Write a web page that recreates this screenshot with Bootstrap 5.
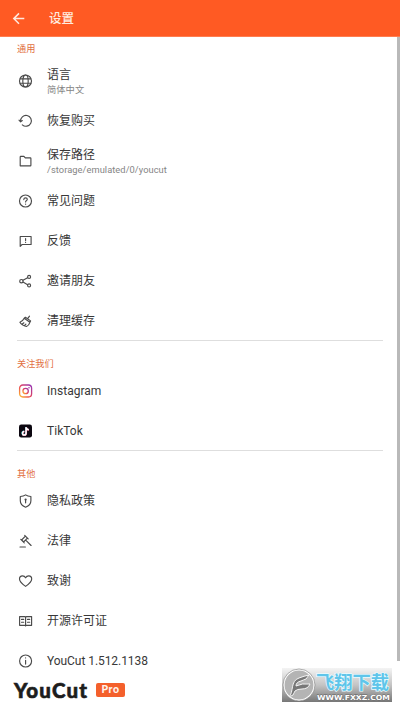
<!DOCTYPE html>
<html lang="zh-CN">
<head>
<meta charset="utf-8">
<meta name="viewport" content="width=device-width, initial-scale=1">
<title>设置</title>
<link href="https://cdn.jsdelivr.net/npm/bootstrap@5.3.0/dist/css/bootstrap.min.css" rel="stylesheet">
<style>
body{font-family:Roboto,"Noto Sans CJK SC",sans-serif;font-size:12px;line-height:16px;color:#383838;background:#fff;height:710px;overflow:hidden}
.topbar{height:37px;background:#ff5a23;color:#ffeadf;padding-left:11px;gap:22px;border-bottom:1px solid #ff7d50}
.topbar h1{font-size:12.5px;line-height:18px;font-weight:500;padding-top:1px}
.group-title{height:30px;padding:14px 0 0 17px;font-size:9.2px;line-height:17px;color:#e2703f;font-weight:400}
.group-title.first{height:24px;padding-top:3px}
.group-rows{margin:0 17px}
.group-rows.ruled{border-bottom:1px solid #dedede}
.setting{height:40px;gap:13px;padding-left:1px}
.ruled .setting:last-child{height:39px;padding-top:1px}
.setting svg{width:16px;height:16px;flex:none;fill:none;stroke:#4a4a4a;stroke-width:1.15;stroke-linecap:round;stroke-linejoin:round}
.latin{letter-spacing:.03px}
.version{letter-spacing:-.06px}
.hint{font-size:9.3px;line-height:13px;color:#858585}
.path-label{padding-top:2px}
.hint.path{letter-spacing:.06px;line-height:14px}
.brand{height:29px;padding:0 0 0 14px;gap:6px}
.brand-name{width:76px;font:900 20.5px/19px Lato,sans-serif;color:#1d1d1d;letter-spacing:1.15px;-webkit-text-stroke:.6px #1d1d1d}
.pro{width:29px;height:14px;margin-top:2px;border-radius:2px;background:#f4602c;color:#fff3ec;font:900 10.5px/13px Lato,sans-serif;letter-spacing:.6px}
.scroll-thumb{right:0;top:37px;width:3px;height:624px;background:#b9b9b9}
.watermark{left:282px;top:668px;width:110px;height:34px}
</style>
<script src="https://cdn.jsdelivr.net/npm/bootstrap@5.3.0/dist/js/bootstrap.bundle.min.js"></script>
</head>
<body class="position-relative">
<header class="topbar d-flex align-items-center">
<svg width="16" height="16" viewBox="0 0 16 16" fill="none" stroke="#ffe9de" stroke-width="1.5"><path d="M13.3 8.6H3M8 3.4 2.8 8.6 8 13.8"/></svg>
<h1 class="m-0">设置</h1>
</header>
<main>
<section>
<h2 class="group-title first m-0">通用</h2>
<div class="group-rows ruled">
<div class="setting d-flex align-items-center"><svg viewBox="0 0 16 16"><circle cx="7.5" cy="8" r="6"/><ellipse cx="7.5" cy="8" rx="2.7" ry="6"/><path d="M2.3 5.8h10.4M2.3 10.2h10.4"/></svg><div>语言<div class="hint">简体中文</div></div></div>
<div class="setting d-flex align-items-center"><svg viewBox="0 0 16 16"><path d="M2.6 8.3A5.4 5.4 0 1 1 4.3 11.8M1 7.2l1.6 1.7L4.3 7.5"/></svg><div>恢复购买</div></div>
<div class="setting d-flex align-items-center"><svg viewBox="0 0 16 16"><path d="M2.2 12.8V3.9q0-.6.6-.6h3.1l1.4 1.6h5q.6 0 .6.6v6.8q0 .6-.6.6H2.8q-.6 0-.6-.5Z"/></svg><div class="path-label">保存路径<div class="hint path">/storage/emulated/0/youcut</div></div></div>
<div class="setting d-flex align-items-center"><svg viewBox="0 0 16 16"><circle cx="7.5" cy="8" r="6"/><path d="M5.8 6.6q0-1.8 1.8-1.8 1.7 0 1.7 1.5 0 .9-1 1.5-.7.4-.7 1.2M7.6 11v.2"/></svg><div>常见问题</div></div>
<div class="setting d-flex align-items-center"><svg viewBox="0 0 16 16"><path d="M2.2 13.3V3.5h10.9v8H4.1l-1.9 1.8ZM7.6 5.6v2M7.6 9.3v.1"/></svg><div>反馈</div></div>
<div class="setting d-flex align-items-center"><svg viewBox="0 0 16 16"><circle cx="3.4" cy="8.2" r="1.7"/><circle cx="11.1" cy="3.9" r="1.5"/><circle cx="11.1" cy="12.4" r="1.5"/><path d="m5 7.3 4.6-2.6M5 9.1l4.6 2.6"/></svg><div>邀请朋友</div></div>
<div class="setting d-flex align-items-center"><svg viewBox="0 0 16 16"><path d="M6.2 5.3Q4.7 8.4 1.9 9.2q1.8 3.1 6.6 4.3 2.4-1 3.4-4.2ZM6.2 5.3l1.2-1 5.2 3.6-.7 1.4M9.6 5.7l1.9-2.6M4 11.3l1.9-1.5M6.4 12.7l1.5-1.6"/></svg><div>清理缓存</div></div>
</div>
</section>
<section>
<h2 class="group-title m-0">关注我们</h2>
<div class="group-rows ruled">
<div class="setting d-flex align-items-center"><svg viewBox="0 0 16 16"><defs><linearGradient id="insta" x1="0" y1="1" x2="1" y2="0"><stop stop-color="#ffc02e"/><stop offset=".45" stop-color="#e94457"/><stop offset="1" stop-color="#9133b8"/></linearGradient></defs><g stroke="url(#insta)" stroke-width="1.3"><rect x="1.6" y="2" width="12" height="12" rx="3.2"/><circle cx="7.6" cy="8" r="2.7"/></g><circle cx="11" cy="4.7" r=".8" fill="#b33ba0" stroke="none"/></svg><div class="latin">Instagram</div></div>
<div class="setting d-flex align-items-center"><svg viewBox="0 0 16 16"><rect x="1" y="1.5" width="13" height="13" rx="2.2" fill="#0c0710" stroke="none"/><g stroke-width="1.5" stroke-linecap="butt"><path d="M7.8 4v6a1.8 1.8 0 1 1-1.8-1.8M7.8 4q.2 2.3 2.7 2.6" stroke="#36dbe0"/><path d="M8.3 4.4v6a1.8 1.8 0 1 1-1.8-1.8M8.3 4.4q.2 2.3 2.7 2.6" stroke="#ed4270"/><path d="M8.1 4.2v6a1.8 1.8 0 1 1-1.8-1.8M8.1 4.2q.2 2.3 2.7 2.6" stroke="#fff"/></g></svg><div class="latin">TikTok</div></div>
</div>
</section>
<section>
<h2 class="group-title m-0">其他</h2>
<div class="group-rows">
<div class="setting d-flex align-items-center"><svg viewBox="0 0 16 16"><path d="M7.6 1.9q2.1 1.5 5.3 1.6v4.3q0 4.4-5.3 6.4-5.3-2-5.3-6.4V3.5q3.2-.1 5.3-1.6ZM7.6 7.2v2.6"/><circle cx="7.6" cy="6.5" r=".55"/></svg><div>隐私政策</div></div>
<div class="setting d-flex align-items-center"><svg viewBox="0 0 16 16"><path d="m3.6 7 3.8-3.8 2 2L5.6 9ZM6.7 2.4l3.5 3.5M2.8 6.3l3.5 3.5M7.7 7.2l5.4 5.3M2 14h5.4"/></svg><div>法律</div></div>
<div class="setting d-flex align-items-center"><svg viewBox="0 0 16 16"><path d="M7.6 13.4Q1.5 9.2 1.5 6.1q0-3.2 3-3.2 2.1 0 3.1 1.9 1-1.9 3.1-1.9 3 0 3 3.2 0 3.1-6.1 7.3Z"/></svg><div>致谢</div></div>
<div class="setting d-flex align-items-center"><svg viewBox="0 0 16 16"><path d="M1.6 3.6h4.9q1.1 0 1.1.8 0-.8 1.1-.8h4.9v8.7H8.7q-1.1 0-1.1.7 0-.7-1.1-.7H1.6ZM7.6 4.4V13M3.5 6.4h2.2M3.5 9.2h2.2M9.5 6.4h2.2M9.5 9.2h2.2"/></svg><div>开源许可证</div></div>
<div class="setting d-flex align-items-center"><svg viewBox="0 0 16 16"><circle cx="7.6" cy="8" r="6"/><path d="M7.6 7.3v3.8M7.6 4.9V5"/></svg><div class="version">YouCut 1.512.1138</div></div>
</div>
</section>
</main>
<footer class="brand d-flex align-items-start">
<span class="brand-name text-nowrap">YouCut</span><span class="pro text-center">Pro</span>
</footer>
<div class="scroll-thumb position-absolute"></div>
<svg class="watermark position-absolute" viewBox="0 0 110 34">
<defs><linearGradient id="band" x1="0" y1="0" x2="0" y2="1"><stop stop-color="#f4f4f4"/><stop offset=".5" stop-color="#c4c4c4"/><stop offset="1" stop-color="#777"/></linearGradient></defs>
<rect width="110" height="34" fill="url(#band)"/>
<circle cx="17" cy="17" r="15.2" fill="#b4b4b4" stroke="#fff" stroke-width="1.5"/><circle cx="17" cy="17" r="16" fill="none" stroke="#777" stroke-width=".6"/>
<path d="M7 29C12 24 8 13 17 10q5-2 10-3-2 5-8 6-5 1-5 5 6-3 14-2-2 5-8 5-5 0-7 2-1 5-6 6Z" fill="#777" stroke="#f5f5f5" stroke-width="1"/>
<text x="34" y="20.5" textLength="73" lengthAdjust="spacingAndGlyphs" font-family="Noto Sans CJK SC, sans-serif" font-size="18" font-weight="700" fill="#5fc5ea" stroke="#e8fbff" stroke-width="1.4" paint-order="stroke">飞翔下载</text>
<text x="35" y="31.5" textLength="73" lengthAdjust="spacingAndGlyphs" font-family="DejaVu Sans, sans-serif" font-size="7" font-weight="700" fill="#fff" stroke="#666" stroke-width=".7" paint-order="stroke">WWW.FXXZ.COM</text>
</svg>
</body>
</html>
